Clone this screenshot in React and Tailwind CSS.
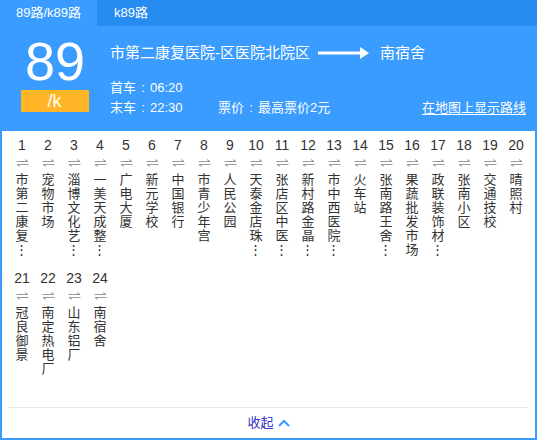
import React from 'react';

// '*' marks a name cut short in the list (shown as a vertical ellipsis)
const stops = [
    '市第二康复*', '宠物市场', '淄博文化艺*', '一美天成整*', '广电大厦', '新元学校', '中国银行',
    '市青少年宫', '人民公园', '天泰金店珠*', '张店区中医*', '新村路金晶*', '市中西医院*', '火车站',
    '张南路王舍*', '果蔬批发市场', '政联装饰材*', '张南小区', '交通技校', '晴照村',
    '冠良御景', '南定热电厂', '山东铝厂', '南宿舍'
];

const SwapIcon = () => (
    <svg width="13" height="8" viewBox="0 0 13 8" fill="none" stroke="#9a9a9a" strokeWidth="1">
        <path d="M0.5 2.5 H12 L9 0.5" />
        <path d="M12.5 5.5 H1 L4 7.5" />
    </svg>
);

const StopItem = ({ index, name }) => {
    const chars = [...name].map(c => (c === '*' ? '⋮' : c));
    return (
        <div className="flex flex-col items-center w-[26px]">
            <div className="h-[16px] leading-[16px] text-[14px] text-[#333]">{index}</div>
            <div className="mt-[6px] h-[8px] flex items-center"><SwapIcon /></div>
            <div className="mt-[6px] flex flex-col items-center">
                {chars.map((c, i) => (
                    <span key={i} className="text-[13px] leading-[14px] text-[#333]">{c}</span>
                ))}
            </div>
        </div>
    );
};

const Colon = () => <span className="inline-block w-[14px] text-center">:</span>;

export default function App() {
    return (
        <div className="w-[537px] h-[440px] border-2 border-t-0 border-[#3a9cfe] bg-white flex flex-col text-[13px]" style={{ fontFamily: '"Liberation Sans", "Noto Sans CJK SC", sans-serif' }}>
            {/* tabs */}
            <div className="h-[26px] -mx-[2px] bg-[#268cf0] flex text-white text-[13px]">
                <div className="w-[97px] bg-[#3a9cfe] flex items-center justify-center">89路/k89路</div>
                <div className="pl-[17px] flex items-center">k89路</div>
            </div>

            {/* header */}
            <div className="h-[105px] -mx-[2px] bg-[#3a9cfe] text-white flex">
                <div className="w-[110px] flex flex-col items-center pt-[7px]">
                    <div className="text-[54px] leading-[57px]">89</div>
                    <div className="w-[68px] h-[22px] bg-[#ffb526] flex items-center justify-center text-[18px] -ml-[1px]">/k</div>
                </div>
                <div className="flex-1 pt-[16px] pr-[11px]">
                    <div className="flex items-center h-[22px] text-[15px]">
                        <span>市第二康复医院-区医院北院区</span>
                        <svg width="52" height="12" viewBox="0 0 52 12" className="ml-[8px] mr-[10px]">
                            <path d="M0 6 H44" stroke="white" strokeWidth="3" />
                            <path d="M42 0 L51 6 L42 12 Z" fill="white" />
                        </svg>
                        <span>南宿舍</span>
                    </div>
                    <div className="mt-[14px] leading-[20px]">首车<Colon />06:20</div>
                    <div className="flex leading-[20px]">
                        <span className="w-[108px]">末车<Colon />22:30</span>
                        <span>票价<Colon />最高票价2元</span>
                        <span className="ml-auto underline underline-offset-2">在地图上显示路线</span>
                    </div>
                </div>
            </div>

            {/* stops */}
            <div className="h-[276px] pt-[6px] pl-[7px] grid grid-cols-[repeat(20,26px)] content-start gap-y-[13px]">
                {stops.map((s, i) => <StopItem key={i} index={i + 1} name={s} />)}
            </div>

            <div className="mx-[7px] h-px bg-[#e6e6e6]" />

            <div className="flex-1 flex items-center justify-center gap-[4px]">
                <span className="text-[13px] text-[#3030c8]">收起</span>
                <svg width="12" height="8" viewBox="0 0 12 8" fill="none" stroke="#3a9cfe" strokeWidth="2">
                    <path d="M1 7 L6 2 L11 7" />
                </svg>
            </div>
        </div>
    );
}
